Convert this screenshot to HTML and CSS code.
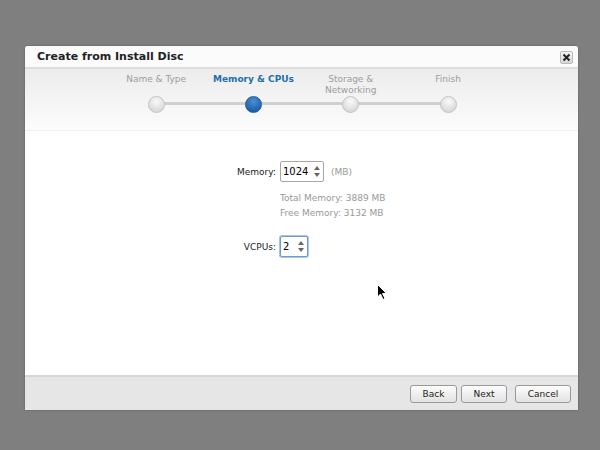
FILE: index.html
```html
<!DOCTYPE html>
<html>
<head>
<meta charset="utf-8">
<link rel="stylesheet" href="styles.css">
</head>
<body>
<div class="window">
  <div class="titlebar">
    <span class="title">Create from Install Disc</span>
    <span class="close"><svg width="9" height="9" viewBox="0 0 9 9"><path d="M1.5 1.5 L7.5 7.5 M7.5 1.5 L1.5 7.5" stroke="#222" stroke-width="2"/></svg></span>
  </div>
  <div class="steps">
    <div class="track"></div>
    <div class="step"><div class="label">Name &amp; Type</div><div class="dot"></div></div>
    <div class="step active"><div class="label">Memory &amp; CPUs</div><div class="dot"></div></div>
    <div class="step"><div class="label">Storage &amp;<br>Networking</div><div class="dot"></div></div>
    <div class="step"><div class="label">Finish</div><div class="dot"></div></div>
  </div>
  <div class="content">
    <div class="form">
      <div class="flabel">Memory:</div>
      <div class="field">
        <div class="spin mem"><span class="val">1024</span><span class="arrows"><i class="up"></i><i class="down"></i></span></div>
        <span class="unit">(MB)</span>
      </div>
      <div></div>
      <div class="info">Total Memory: 3889 MB<br>Free Memory: 3132 MB</div>
      <div class="flabel">VCPUs:</div>
      <div class="field">
        <div class="spin cpu focus"><span class="val">2</span><span class="arrows"><i class="up"></i><i class="down"></i></span></div>
      </div>
    </div>
    <svg class="cursor" width="12" height="18" viewBox="0 0 12 18"><path d="M0.5 0.5 L0.5 13 L3.5 10 L6 15.5 L8 14.5 L5.5 9.5 L9.5 9.5 Z" fill="#000" stroke="#fff" stroke-width="1"/></svg>
  </div>
  <div class="footer">
    <button class="btn back">Back</button>
    <button class="btn next">Next</button>
    <button class="btn cancel">Cancel</button>
  </div>
</div>
</body>
</html>
```
FILE: styles.css
```css
html, body {
  margin: 0;
  padding: 0;
}
body {
  background: #7f7f7f;
  width: 600px;
  height: 450px;
  overflow: hidden;
  font-family: "DejaVu Sans", sans-serif;
  padding-top: 46px;
  box-sizing: border-box;
}
.window {
  margin-left: 25px;
  width: 553px;
  height: 364px;
  background: #fff;
  border-radius: 3px 3px 0 0;
  display: flex;
  flex-direction: column;
  box-shadow: 0 0 2px rgba(0,0,0,0.35);
  overflow: hidden;
}
.titlebar {
  height: 21px;
  flex: none;
  display: flex;
  align-items: center;
  justify-content: space-between;
  padding: 0 5px 0 12px;
  background: #fbfbfb;
  border-bottom: 2px solid #dedede;
}
.title {
  font-weight: bold;
  font-size: 11px;
  color: #222;
}
.close {
  width: 11px;
  height: 11px;
  border: 1px solid #bbb;
  border-radius: 2px;
  background: linear-gradient(#f4f4f4, #d6d6d6);
  display: flex;
  align-items: center;
  justify-content: center;
  margin-top: 1px;
}
.steps {
  position: relative;
  height: 61px;
  flex: none;
  display: grid;
  grid-template-columns: repeat(4, 97.3px);
  padding-left: 82.5px;
  background: linear-gradient(#ececec, #fcfcfc);
  border-bottom: 1px solid #f0f0f0;
}
.track {
  position: absolute;
  left: 131px;
  top: 33px;
  width: 292px;
  height: 3px;
  background: #cfcfcf;
}
.step {
  position: relative;
  display: flex;
  flex-direction: column;
  align-items: center;
}
.label {
  height: 22px;
  padding-top: 5px;
  font-size: 9px;
  line-height: 11px;
  color: #9d9d9d;
  text-align: center;
  white-space: nowrap;
}
.step.active .label {
  color: #1e6fad;
  font-weight: bold;
}
.dot {
  width: 15px;
  height: 15px;
  border-radius: 50%;
  border: 1px solid #c4c4c4;
  background: radial-gradient(circle at 50% 30%, #fafafa, #d9d9d9 75%);
}
.step.active .dot {
  border-color: #245d9c;
  background: radial-gradient(circle at 50% 30%, #4a8fd6, #1f5fa8 75%);
}
.content {
  position: relative;
  flex: 1;
  padding-top: 30px;
}
.form {
  display: grid;
  grid-template-columns: 251px auto;
  column-gap: 4px;
  align-items: center;
  font-size: 9px;
  color: #222;
}
.flabel {
  text-align: right;
}
.field {
  display: flex;
  align-items: center;
  gap: 7px;
}
.spin {
  height: 19px;
  border: 1px solid #a8a8a8;
  border-radius: 2px;
  background: #fff;
  display: flex;
  align-items: center;
  justify-content: space-between;
  padding: 0 3px 0 2px;
  box-sizing: content-box;
  font-size: 10px;
  color: #000;
}
.spin.mem { width: 37px; }
.spin.cpu { width: 21px; }
.spin.focus {
  border-color: #6d9bd1;
  box-shadow: 0 0 0 1px #a9c6ea;
}
.unit { color: #999; }
.arrows {
  display: flex;
  flex-direction: column;
  gap: 3px;
}
.arrows i {
  width: 0;
  height: 0;
  border-left: 3.5px solid transparent;
  border-right: 3.5px solid transparent;
}
.arrows .up { border-bottom: 4px solid #666; }
.arrows .down { border-top: 4px solid #666; }
.info {
  color: #999;
  line-height: 15px;
  padding: 9px 0 15px;
}
.cursor {
  position: absolute;
  left: 352px;
  top: 153px;
}
.footer {
  height: 33px;
  flex: none;
  background: #e6e6e6;
  border-top: 2px solid #d6d6d6;
  display: flex;
  align-items: center;
  justify-content: flex-end;
  padding-right: 7px;
}
.btn {
  height: 18px;
  margin-left: 4px;
  padding: 0;
  border: 1px solid #9a9a9a;
  border-radius: 3px;
  background: linear-gradient(#fdfdfd, #e2e2e2);
  font-family: "DejaVu Sans", sans-serif;
  font-size: 9px;
  color: #222;
}
.back { width: 47px; }
.next { width: 46px; }
.cancel { width: 56px; margin-left: 8px; }
```
